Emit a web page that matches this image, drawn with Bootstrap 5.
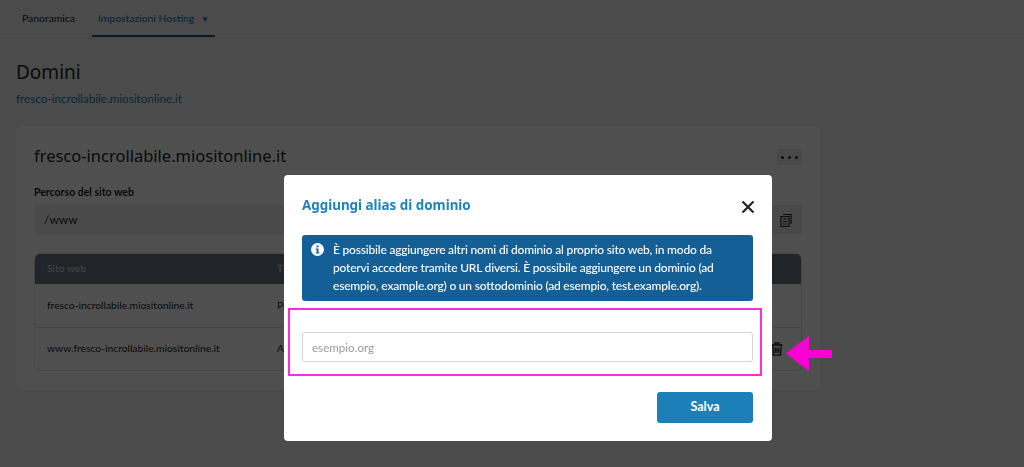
<!DOCTYPE html>
<html lang="it">

<head>
    <meta charset="UTF-8">
    <meta name="viewport" content="width=device-width, initial-scale=1.0">
    <title>Domini</title>
    <link rel="stylesheet" href="https://cdn.jsdelivr.net/npm/bootstrap@5.3.2/dist/css/bootstrap.min.css">
    <style>
        html, body {
            height: 467px;
            overflow: hidden;
        }

        body {
            background-color: #f2f2f2;
            font-family: Lato, "Noto Sans", sans-serif;
            font-size: 11.5px;
            color: #212529;
        }

        .top-tabs {
            height: 38px;
            padding-left: 10px;
            border-bottom: 1px solid #e2e2e2;
            flex-wrap: nowrap;
        }

        .top-tabs .nav-link {
            height: 37px;
            padding: 11px 12px 0;
            font-size: 10.400px;
            color: #212529;
            border-bottom: 2px solid transparent;
            white-space: nowrap;
        }

        .top-tabs .nav-link.active {
            margin-left: 5px;
            padding-left: 6px;
            width: 123px;
            color: #1b6fa8;
            border-bottom-color: #135f96;
        }

        .tab-caret {
            font-size: 8px;
            margin-left: 4px;
        }

        .page-body {
            padding: 22px 16px 0;
            width: 836px;
        }

        .page-title {
            font-family: "Noto Sans", sans-serif;
            font-size: 19px;
            font-weight: 400;
            line-height: 24px;
            margin-bottom: 7px;
        }

        .site-link {
            display: block;
            color: #1b7fb8;
            text-decoration: none;
            font-size: 11.700px;
            line-height: 14px;
        }

        .site-box {
            margin-top: 21px;
            height: 264px;
            padding: 18px 18px 0;
            background-color: #fff;
            border-radius: 6px;
        }

        .site-name {
            font-family: "Noto Sans", sans-serif;
            font-size: 16.500px;
            font-weight: 400;
            line-height: 24px;
            margin: 0;
        }

        .dots-btn {
            width: 25px;
            height: 16px;
            margin-top: 5px;
            background-color: #eaeaea;
            border-radius: 3px;
            font-size: 0;
        }

        .dots-btn i {
            width: 3px;
            height: 3px;
            border-radius: 50%;
            background-color: #212529;
        }

        .path-label {
            font-size: 10.500px;
            font-weight: 700;
            line-height: 14px;
            margin-top: 17px;
            margin-bottom: 6px;
        }

        .path-field {
            height: 29px;
            padding-left: 10px;
            background-color: #eeeeee;
            font-size: 12px;
            line-height: 29px;
            border-radius: 3px 0 0 3px;
        }

        .copy-btn {
            width: 32px;
            height: 29px;
            background-color: #eaeaea;
        }

        .host-table-wrap {
            margin-top: 19px;
            border: 1px solid #e2e2e2;
            border-radius: 6px;
            overflow: hidden;
        }

        .host-table {
            --bs-table-bg: transparent;
            margin: 0;
            font-size: 10.300px;
        }

        .host-table th {
            height: 30px;
            padding: 0 12px;
            vertical-align: middle;
            background-color: #6a7480;
            color: #dfe3e6;
            font-weight: 400;
            border: 0;
        }

        .host-table td {
            height: 43px;
            padding: 0 12px;
            vertical-align: middle;
            border-color: #e2e2e2;
        }

        .host-table tr:last-child td {
            border-bottom: 0;
        }

        .host-table .first-col {
            width: 230px;
        }

        .host-table .trash-cell {
            width: 44px;
            padding-right: 18px;
        }

        .modal-backdrop {
            --bs-backdrop-opacity: 0.69;
            --bs-backdrop-bg: #000;
        }

        .alias-dialog {
            --bs-modal-width: 488px;
            --bs-modal-margin: 0;
            --bs-modal-border-radius: 4px;
            margin: 175px 0 0 284px;
        }

        .alias-content {
            height: 266px;
            padding: 0 19px 0 18px;
            border: 0;
            color: #212529;
        }

        .alias-title {
            font-family: "Noto Sans", sans-serif;
            font-size: 13.400px;
            font-weight: 700;
            line-height: 20px;
            margin: 20px 0 0;
            color: #2184b8;
        }

        .alias-close {
            width: 14px;
            height: 14px;
            padding: 0;
            margin: 25px -2px 0 0;
            border: 0;
            background: none;
            font-size: 0;
        }

        .alias-alert {
            height: 66px;
            margin-top: 20px;
            padding: 6px 30px 0 9px;
            background-color: #135f96;
            color: #fff;
            font-size: 12px;
            letter-spacing: -0.2px;
            font-weight: 500;
            line-height: 18px;
            border-radius: 3px;
        }

        .alias-alert svg {
            flex: none;
            margin: 2px 9px 0 0;
        }

        .alias-input {
            height: 30px;
            margin-top: 31px;
            padding: 0 9px;
            font-size: 11.600px;
            border-color: #d5d5d5;
            border-radius: 3px;
        }

        .alias-input::placeholder {
            color: #9b9b9b;
        }

        .save-btn {
            width: 96px;
            height: 31px;
            margin-top: 30px;
            padding: 0;
            font-size: 12.500px;
            font-weight: 700;
            color: #fff;
            background-color: #1c7fb8;
            border: 0;
            border-radius: 3px;
        }

        /* annotation drawn on top of the screenshot */
        .mark-box {
            position: absolute;
            left: 4px;
            top: 133px;
            width: 474px;
            height: 68px;
            border: 2px solid #ff2bdc;
            pointer-events: none;
        }

        .mark-arrow {
            position: fixed;
            left: 786px;
            top: 336px;
            z-index: 1060;
        }
    </style>
</head>

<body>

    <!-- Page behind the dialog -->
    <ul class="nav top-tabs">
        <li class="nav-item"><a class="nav-link" href="#">Panoramica</a></li>
        <li class="nav-item"><a class="nav-link active" href="#">Impostazioni Hosting <span class="tab-caret">▼</span></a></li>
    </ul>

    <div class="page-body">
        <h1 class="page-title">Domini</h1>
        <a class="site-link" href="#">fresco-incrollabile.miositonline.it</a>

        <div class="site-box">
            <div class="d-flex justify-content-between">
                <h2 class="site-name">fresco-incrollabile.miositonline.it</h2>
                <div class="dots-btn d-flex align-items-center justify-content-center gap-1"><i></i><i></i><i></i></div>
            </div>
            <div class="path-label">Percorso del sito web</div>
            <div class="d-flex">
                <div class="path-field flex-grow-1">/www</div>
                <div class="copy-btn d-flex align-items-center justify-content-center">
                    <svg width="12" height="14" viewBox="0 0 12 14" fill="none" stroke="#212529" stroke-width="1.2">
                        <path d="M3 1.5h8v9.5M1 3.5h8v10H1z"/>
                        <path d="M2.8 6h4.4M2.8 8.5h4.4M2.8 11h4.4"/>
                    </svg>
                </div>
            </div>
            <div class="host-table-wrap">
                <table class="table host-table">
                    <thead>
                        <tr><th class="first-col">Sito web</th><th>Tipo</th><th></th></tr>
                    </thead>
                    <tbody>
                        <tr><td>fresco-incrollabile.miositonline.it</td><td>Primario</td><td></td></tr>
                        <tr>
                            <td>www.fresco-incrollabile.miositonline.it</td>
                            <td>Alias</td>
                            <td class="trash-cell text-end">
                                <svg width="12" height="14" viewBox="0 0 12 14" fill="none" stroke="#212529" stroke-width="1.3">
                                    <path d="M0.5 3h11M4 3V1h4v2M1.8 3l.6 10.2h7.2l.6-10.2"/>
                                    <path d="M4.2 5.5v5.5M6 5.5v5.5M7.8 5.5v5.5"/>
                                </svg>
                            </td>
                        </tr>
                    </tbody>
                </table>
            </div>
        </div>
    </div>

    <!-- Dialog -->
    <div class="modal-backdrop show"></div>
    <div class="modal d-block">
        <div class="modal-dialog alias-dialog">
            <div class="modal-content alias-content">
                <div class="d-flex justify-content-between">
                    <h5 class="alias-title">Aggiungi alias di dominio</h5>
                    <button type="button" class="alias-close" aria-label="Chiudi">
                        <svg width="14" height="14" viewBox="0 0 14 14" stroke="#212529" stroke-width="2.2">
                            <path d="M1.5 1.5l11 11M12.5 1.5l-11 11"/>
                        </svg>
                    </button>
                </div>
                <div class="alias-alert d-flex">
                    <svg width="13" height="13" viewBox="0 0 13 13">
                        <circle cx="6.5" cy="6.5" r="6.5" fill="#fff"/>
                        <rect x="5.5" y="2.4" width="2" height="2" fill="#135f96"/>
                        <path d="M4.7 5.4h2.8v4.1h.9v1.1H4.7V9.500h.9V6.500h-.9z" fill="#135f96"/>
                    </svg>
                    <div>È possibile aggiungere altri nomi di dominio al proprio sito web, in modo da potervi accedere tramite URL diversi. È possibile aggiungere un dominio (ad esempio, example.org) o un sottodominio (ad esempio, test.example.org).</div>
                </div>
                <input type="text" class="form-control alias-input" placeholder="esempio.org">
                <div class="d-flex justify-content-end">
                    <button type="button" class="btn save-btn">Salva</button>
                </div>
                <div class="mark-box"></div>
            </div>
        </div>
    </div>
    <svg class="mark-arrow" width="46" height="35" viewBox="0 0 46 35">
        <path d="M0 17.500L23 0v14h23v8H23v13z" fill="#ff00d4"/>
    </svg>

    <script src="https://cdn.jsdelivr.net/npm/bootstrap@5.3.2/dist/js/bootstrap.bundle.min.js"></script>

</body>

</html>
